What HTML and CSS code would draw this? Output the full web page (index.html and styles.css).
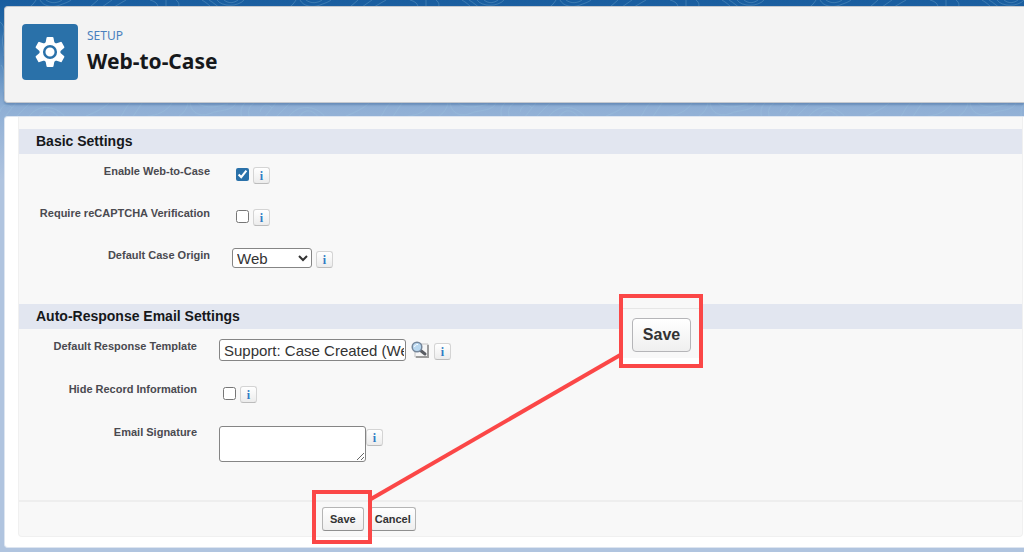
FILE: index.html
```html
<!DOCTYPE html>
<html lang="en">
<head>
  <meta charset="UTF-8" />
  <meta name="viewport" content="width=device-width, initial-scale=1.0" />
  <title>Web-to-Case - Setup</title>
  <link rel="stylesheet" href="styles.css">
</head>
<body>
  <svg class="contours" aria-hidden="true">
    <defs>
      <pattern id="topo" width="260" height="130" patternUnits="userSpaceOnUse">
        <g fill="none" stroke="currentColor">
          <path d="M28 8C32 6 34 3 36 0M40 0C43 6 52 8 60 5C65 3 69 2 71 0M46 0C51 4 58 3 62 0M90 7L98 0M102 7L112 0M114 7L126 0M150 0C157 2 158 5 158 8M166 0V8M176 0C180 3 179 6 178 8M202 0C207 3 210 6 212 8M209 0C214 3 217 6 220 8M217 0C222 7 238 7 244 0M224 0C229 4 234 3 238 0" />
          <path d="M0 112C2 104 8 103 12 108M4 118L16 103M15 118L30 103M28 118C36 104 56 104 66 118M38 118C44 109 52 108 59 118M86 116C96 112 104 108 109 103M120 118C124 112 126 107 130 103M132 118L142 103M144 117C158 115 166 112 172 103M178 117C185 112 187 108 188 103M190 103C192 116 204 117 214 112C224 110 233 110 236 103M198 103C205 109 218 107 228 104M242 118C240 112 241 107 245 103M250 118C247 112 249 106 254 103" />
          <path d="M0 22C4 25 5 30 3 36C1 44 5 49 4 56M1 65C6 70 2 80 4 92" />
        </g>
      </pattern>
    </defs>
    <rect width="100%" height="118" fill="url(#topo)" />
  </svg>

  <header class="page-header">
    <span class="header-icon">
      <svg viewBox="0 0 56 56" aria-hidden="true">
        <g fill="#fff" stroke="#fff" stroke-width="2" stroke-linejoin="round">
          <path d="M25.500 14h5l1.500 8h-8zM25.500 42h5l1.500-8h-8z" />
          <path d="M25.500 14h5l1.500 8h-8zM25.500 42h5l1.500-8h-8z" transform="rotate(60 28 28)" />
          <path d="M25.500 14h5l1.500 8h-8zM25.500 42h5l1.500-8h-8z" transform="rotate(120 28 28)" />
          <circle cx="28" cy="28" r="9.500" />
        </g>
        <circle cx="28" cy="28" r="5.800" fill="#fff" stroke="#2a71a9" stroke-width="2.500" />
      </svg>
    </span>
    <div>
      <p class="eyebrow">SETUP</p>
      <h1>Web-to-Case</h1>
    </div>
  </header>

  <main class="panel">
    <form class="settings">
      <section class="basic">
        <h2>Basic Settings</h2>
        <div class="row">
          <label for="enable">Enable Web-to-Case</label>
          <div class="field"><input type="checkbox" id="enable" checked /><button type="button" class="info">i</button></div>
        </div>
        <div class="row">
          <label for="captcha">Require reCAPTCHA Verification</label>
          <div class="field"><input type="checkbox" id="captcha" /><button type="button" class="info">i</button></div>
        </div>
        <div class="row">
          <label for="origin">Default Case Origin</label>
          <div class="field">
            <select id="origin"><option>Web</option><option>Phone</option><option>Email</option></select>
            <button type="button" class="info">i</button>
          </div>
        </div>
      </section>

      <section class="auto">
        <h2>Auto-Response Email Settings</h2>
        <div class="row">
          <label for="template">Default Response Template</label>
          <div class="field">
            <input type="text" id="template" value="Support: Case Created (Web Inquiries)" />
            <button type="button" class="lookup" aria-label="Lookup">
              <svg viewBox="0 0 20 18" aria-hidden="true">
                <path d="M5 3h13v13H5z" fill="#f6f6f6" stroke="#c4c4c4" />
                <path d="M18 4v12H6" fill="none" stroke="#9c9c9c" stroke-width="2" />
                <path d="M10 9l5 4" stroke="#5a5d63" stroke-width="3" stroke-linecap="round" />
                <circle cx="7" cy="6" r="4.800" fill="#b9d8f0" stroke="#75869a" stroke-width="1.500" />
                <path d="M4.500 6C5 4 6 3.500 8 3.500" fill="none" stroke="#fff" />
              </svg>
            </button>
            <button type="button" class="info">i</button>
          </div>
        </div>
        <div class="row">
          <label for="hide">Hide Record Information</label>
          <div class="field"><input type="checkbox" id="hide" /><button type="button" class="info">i</button></div>
        </div>
        <div class="row">
          <label for="signature">Email Signature</label>
          <div class="field field-top"><textarea id="signature"></textarea><button type="button" class="info">i</button></div>
        </div>
      </section>

      <div class="actions">
        <button type="button" class="btn">Save</button>
        <button type="button" class="btn">Cancel</button>
      </div>
    </form>

    <!-- highlight around Save, with an enlarged copy -->
    <svg class="connector" aria-hidden="true"><path d="M366 382L617 237" /></svg>
    <div class="highlight"></div>
    <div class="callout">
      <div class="callout-body"><button type="button" class="btn btn-large">Save</button></div>
    </div>
  </main>
</body>
</html>
```
FILE: styles.css
```css
* {
  box-sizing: border-box;
}
body {
  margin: 0;
  padding: 6px 0 4px 4px;
  min-height: 100vh;
  font-family: "Liberation Sans", Arial, sans-serif;
  font-size: 11px;
  color: #16181b;
  background: linear-gradient(#195d9f 0, #1e64a4 18px, #8fafd5 108px, #b0c4df 180px) #b0c4df no-repeat;
  overflow-x: hidden;
}
h1, h2, p {
  margin: 0;
}
button, input, select, textarea {
  font-family: inherit;
  margin: 0;
}
.contours {
  position: absolute;
  top: 0;
  left: 0;
  width: 100%;
  height: 118px;
  color: rgba(160, 205, 225, 0.25);
}

/* header */
.page-header {
  position: relative;
  display: flex;
  gap: 9px;
  height: 97px;
  padding: 17px;
  background: #f3f3f3;
  border: 1px solid #c4c8ce;
  border-right: none;
  border-radius: 4px 0 0 4px;
  box-shadow: 0 2px 2px rgba(60, 100, 150, 0.4);
  font-family: "Noto Sans", "Open Sans", sans-serif;
}
.header-icon {
  width: 56px;
  height: 56px;
  background: #2a71a9;
  border-radius: 4px;
}
.header-icon svg {
  display: block;
}
.eyebrow {
  padding-top: 3px;
  font-size: 12px;
  line-height: 18px;
  color: #4a80bd;
}
h1 {
  font-size: 21px;
  line-height: 32px;
  font-weight: 700;
}

/* settings panel */
.panel {
  position: relative;
  margin-top: 13px;
  padding: 0 1px 10px 13px;
  background: #fff;
  border: 1px solid #dde5f0;
  border-right: none;
  border-radius: 4px 0 0 4px;
}
.settings {
  padding-top: 12px;
  background: #f8f8f8;
  border: 1px solid #f0f0f0;
  border-top: none;
  border-radius: 0 0 4px 4px;
}
h2 {
  padding-left: 17px;
  height: 25px;
  font-size: 14px;
  line-height: 25px;
  background: #e2e6f0;
}
.basic {
  padding-bottom: 24px;
}
.auto {
  padding-bottom: 42px;
}
.row {
  display: flex;
  height: 42px;
}
.auto .row {
  height: 43px;
}
.row label {
  width: 191px;
  padding-top: 10px;
  line-height: 14px;
  font-weight: bold;
  text-align: right;
  white-space: nowrap;
  color: #4a4a50;
}
.auto .row label {
  width: 178px;
}
.field {
  display: flex;
  align-items: center;
  gap: 4px;
  height: 20px;
  margin: 10px 0 0 22px;
}
.auto .field {
  margin-top: 11px;
}
.field-top {
  align-items: flex-start;
  gap: 0;
}
.field-top .info {
  margin-top: 3px;
}
input[type="checkbox"] {
  width: 13px;
  height: 13px;
  margin-left: 4px;
  accent-color: #2a71a9;
}
select, input[type="text"], textarea {
  font-size: 15px;
  color: #333;
  background: #fff;
  border: 1px solid #858585;
  border-radius: 3px;
}
select {
  width: 80px;
  height: 20px;
  padding: 0;
}
input[type="text"] {
  width: 187px;
  height: 22px;
  padding: 0 1px 0 4px;
}
textarea {
  width: 147px;
  height: 36px;
}
.info {
  width: 17px;
  height: 17px;
  margin-top: 3px;
  padding: 0;
  font-family: "Liberation Serif", serif;
  font-size: 12px;
  line-height: 14px;
  font-weight: bold;
  color: #2f7cc4;
  background: linear-gradient(#fff, #ececec);
  border: 1px solid #d4d4d4;
  border-bottom-color: #bcbcbc;
  border-radius: 3px;
}
.lookup {
  width: 20px;
  height: 18px;
  padding: 0;
  background: none;
  border: none;
}
.lookup svg {
  display: block;
}
.actions {
  display: flex;
  gap: 6px;
  padding: 5px 0 5px 303px;
  border-top: 2px solid #eee;
}
.btn {
  height: 24px;
  padding: 0 7px;
  font-size: 11px;
  font-weight: bold;
  color: #333;
  background: linear-gradient(#fff, #efefef);
  border: 1px solid #b5b5b5;
  border-bottom-color: #8f8f8f;
  border-radius: 3px;
}
.actions .btn + .btn {
  padding: 0 4px;
}

/* annotation */
.connector {
  position: absolute;
  top: 0;
  left: 0;
  width: 100%;
  height: 100%;
  fill: none;
  stroke: #fb4747;
  stroke-width: 4;
  pointer-events: none;
}
.highlight, .callout {
  position: absolute;
  border: 4px solid #fb4747;
}
.highlight {
  top: 373px;
  left: 307px;
  width: 60px;
  height: 54px;
  pointer-events: none;
}
.callout {
  top: 177px;
  left: 614px;
  width: 84px;
  height: 74px;
  padding: 10px 0 4px;
  background: linear-gradient(#f8f8f8 60px, #fff 60px);
}
.callout-body {
  padding: 9px;
  border-top: 1px solid #e6e6e6;
}
.btn-large {
  width: 59px;
  height: 34px;
  padding: 0;
  font-size: 16px;
  border-color: #b5b5b8;
  border-radius: 4px;
}
```
